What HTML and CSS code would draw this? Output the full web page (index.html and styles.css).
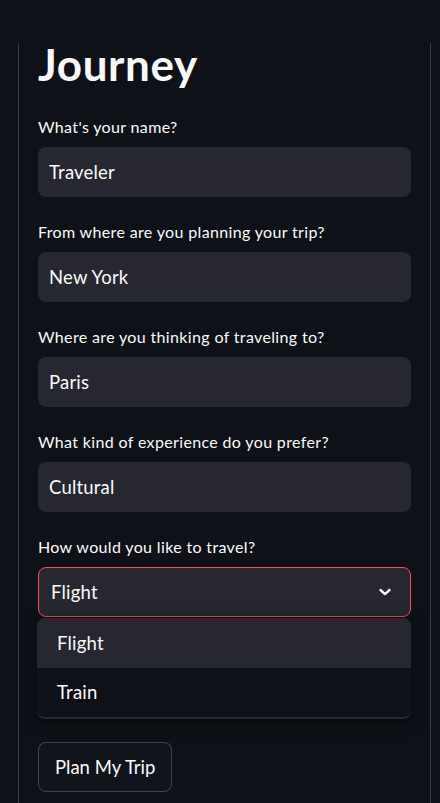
FILE: index.html
```html
<!DOCTYPE html>
<html lang="en">
<head>
<meta charset="utf-8">
<title>Journey</title>
<link rel="stylesheet" href="styles.css">
</head>
<body>
<main class="frame">
  <h1 class="title">Journey</h1>
  <div class="field">
    <label class="label">What's your name?</label>
    <div class="input">Traveler</div>
  </div>
  <div class="field">
    <label class="label">From where are you planning your trip?</label>
    <div class="input">New York</div>
  </div>
  <div class="field">
    <label class="label">Where are you thinking of traveling to?</label>
    <div class="input">Paris</div>
  </div>
  <div class="field">
    <label class="label">What kind of experience do you prefer?</label>
    <div class="input">Cultural</div>
  </div>
  <div class="field last">
    <label class="label">How would you like to travel?</label>
    <div class="select">
      <span>Flight</span>
      <svg class="chev" width="14" height="10" viewBox="0 0 14 10" aria-hidden="true"><path d="M2.5 3 L7 7.2 L11.5 3" fill="none" stroke="#fafafa" stroke-width="2.4" stroke-linecap="round" stroke-linejoin="round"/></svg>
    </div>
    <ul class="menu">
      <li class="opt active">Flight</li>
      <li class="opt">Train</li>
    </ul>
  </div>
  <button class="btn">Plan My Trip</button>
</main>
</body>
</html>
```
FILE: styles.css
```css
html, body {
  margin: 0;
  padding: 0;
  background: #0e1117;
  color: #fafafa;
  font-family: "Lato", "Noto Sans", sans-serif;
}
.frame {
  margin: 43px 0 0 18px;
  width: 373px;
  padding: 0 19px;
  border-left: 1px solid #3a3d45;
  border-right: 1px solid #3a3d45;
  min-height: 760px;
}
.title {
  margin: 0 0 30px;
  font-size: 44px;
  line-height: 43px;
  letter-spacing: 0.6px;
  font-weight: 700;
  height: 43px;
}
.field {
  display: flex;
  flex-direction: column;
  margin-bottom: 24px;
}
.field.last { margin-bottom: 23px; }
.label {
  font-size: 16px;
  line-height: 21px;
  letter-spacing: 0.35px;
  margin-bottom: 10px;
  color: #fafafa;
}
.input {
  height: 50px;
  box-sizing: border-box;
  background: #262730;
  border-radius: 8px;
  padding: 0 11px;
  display: flex;
  align-items: center;
  font-size: 18.5px;
  letter-spacing: 0.2px;
}
.select {
  height: 50px;
  box-sizing: border-box;
  background: #262730;
  border: 1px solid #ff4b4b;
  border-radius: 8px;
  padding: 0 18px 0 12px;
  display: flex;
  align-items: center;
  justify-content: space-between;
  font-size: 18.5px;
  letter-spacing: 0.2px;
}
.chev { display: block; }
.menu {
  list-style: none;
  margin: 1px 0 0 -1px;
  padding: 0 0 2px;
  background: #262730;
  border-radius: 8px;
  overflow: hidden;
  box-shadow: 0 4px 16px rgba(0, 0, 0, 0.55);
}
.opt {
  height: 49.5px;
  display: flex;
  align-items: center;
  padding: 0 20px;
  font-size: 18.5px;
  letter-spacing: 0.2px;
  background: #0e1117;
}
.opt.active { background: #262730; }
.opt:last-child { border-radius: 0 0 8px 8px; }
.btn {
  display: block;
  height: 50px;
  padding: 0 16px;
  background: #11141b;
  border: 1px solid rgba(250, 250, 250, 0.2);
  border-radius: 8px;
  color: #fafafa;
  font-family: inherit;
  font-size: 18.5px;
}
```
